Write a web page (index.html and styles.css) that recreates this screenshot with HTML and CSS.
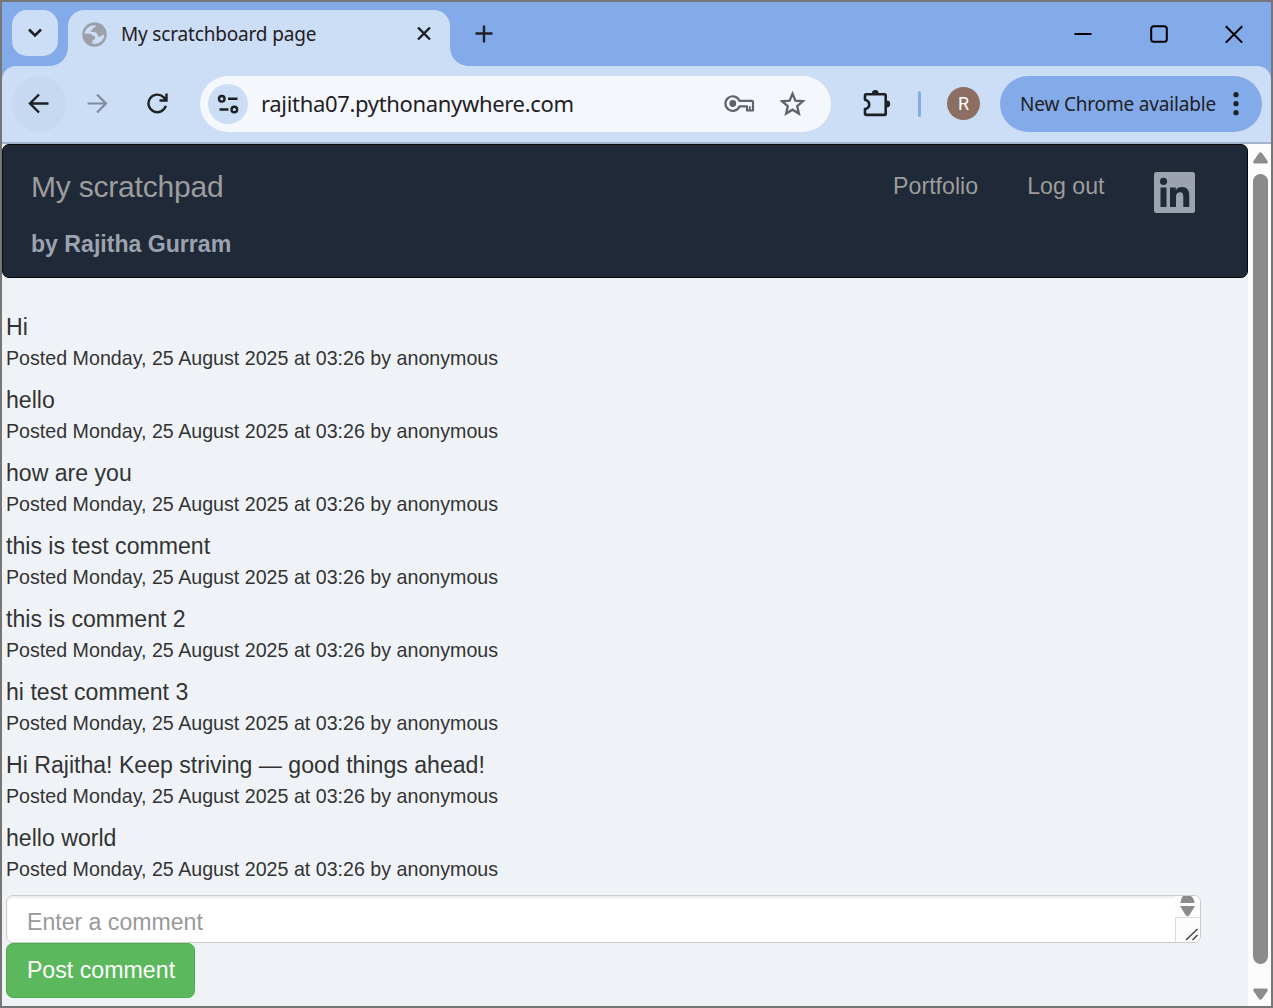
FILE: index.html
```html
<!DOCTYPE html>
<html lang="en">
<head>
<meta charset="utf-8">
<title>My scratchboard page</title>
<link rel="stylesheet" href="styles.css">
</head>
<body>
<div class="window">
  <header class="tabstrip">
    <button class="tab-search" aria-label="Search tabs">
      <svg width="14" height="10" viewBox="0 0 14 10"><path d="M1 1.500l6 6 6-6" fill="none" stroke="#1f2023" stroke-width="2.6"/></svg>
    </button>
    <div class="tab">
      <svg class="globe" width="25" height="25" viewBox="0 0 25 25"><circle cx="12.500" cy="12.500" r="12.200" fill="#9ca1a8"/><g fill="#ccddf6"><path d="M2.600 11.800C3.200 6.500 7.500 2.700 13.500 3.200c.5 1.300-.5 2.300-2.300 2.600-.3 1.800-.7 2.600-2.600 2.700.2 1.300.8 1.700 2.500 1.600 2.500-.2 4 .8 4.500 2.900.5 1.800 2 2 3.500 1.200.7-1 2-1.300 3.200-1.400-.2 5-4.300 9-9.800 9.300-1-.1-2-.3-2.200-.5v-3.200c1.300 0 2.700-.7 2.800-2.200.2-2-.9-2.600-2.800-2.600-.8-1.300-1.500-1.900-3.300-1.800z"/></g></svg>
      <span class="tab-title">My scratchboard page</span>
      <svg class="tab-close" width="14" height="14" viewBox="0 0 14 14"><path d="M1 .5l12 12M13 .5L1 12.500" stroke="#1f2023" stroke-width="2.4"/></svg>
    </div>
    <svg class="new-tab" width="18" height="18" viewBox="0 0 18 18"><path d="M9 .5v17M.5 8.500h17" stroke="#1f2023" stroke-width="2.4"/></svg>
    <div class="controls">
      <svg width="18" height="18" viewBox="0 0 18 18"><path d="M.5 9h17" stroke="#000" stroke-width="2"/></svg>
      <svg width="18" height="18" viewBox="0 0 18 18"><rect x="1.200" y="1.200" width="15.600" height="15.600" rx="2.500" fill="none" stroke="#000" stroke-width="2"/></svg>
      <svg width="18" height="18" viewBox="0 0 18 18"><path d="M.8 1.200l16.400 16.400M17.200 1.200L.8 17.600" stroke="#000" stroke-width="2"/></svg>
    </div>
  </header>

  <div class="toolbar">
    <button class="nav-btn back" aria-label="Back"><svg width="22" height="22" viewBox="0 0 22 22"><path d="M20.500 10.500H2.500M11 1.500l-9 9 9 9" fill="none" stroke="#1f2023" stroke-width="2.400"/></svg></button>
    <svg class="forward" width="22" height="22" viewBox="0 0 22 22"><path d="M.5 10.500h18M10 1.500l9 9-9 9" fill="none" stroke="#808b9e" stroke-width="2.200"/></svg>
    <svg class="reload" width="22" height="22" viewBox="0 0 22 22"><path d="M18.800 12.700a8.800 8.800 0 1 1-2.300-8.500l2.500 2.700M19.500.5v7h-7" fill="none" stroke="#1f2023" stroke-width="2.400"/></svg>
    <div class="omnibox">
      <span class="site-info"><svg width="22" height="20" viewBox="0 0 22 20"><g fill="none" stroke="#1f2023" stroke-width="2.400"><circle cx="4.800" cy="4.800" r="2.800"/><path d="M11 4.800h9.500M2.500 15.500h9"/><circle cx="17.300" cy="15.500" r="2.800"/></g></svg></span>
      <span class="url">rajitha07.pythonanywhere.com</span>
      <svg class="key" width="32" height="20" viewBox="0 0 32 20"><path d="M15.500 6.900a7.300 7.300 0 1 0 0 5.400h7.500v4.200h6V8.200q0-1.300-1.300-1.300z" fill="none" stroke="#5f6368" stroke-width="2.200" stroke-linejoin="round"/><circle cx="8.800" cy="9.500" r="3.400" fill="#5f6368"/><path d="M25.800 16.500v-4.300" stroke="#5f6368" stroke-width="1.800"/></svg>
      <svg class="star" width="26" height="26" viewBox="0 0 26 26"><path d="M12.500 2.800l2.900 6.900 7.500.6-5.700 4.900 1.700 7.400-6.400-3.900-6.400 3.900 1.700-7.400-5.700-4.900 7.500-.6z" fill="none" stroke="#5f6368" stroke-width="2.300"/></svg>
    </div>
    <svg class="puzzle" width="30" height="28" viewBox="0 0 30 28"><path d="M4.200 4.300h18.300q1.200 0 1.200 1.200v18.200q0 1.200-1.200 1.200H4.200q-1.200 0-1.200-1.200v-4.600c5.600-1.500 5.600-7.900 0-9.400V5.500q0-1.200 1.200-1.200z" fill="none" stroke="#1f2023" stroke-width="2.600" stroke-linejoin="round"/><path d="M10 4V3.300a3.300 3.300 0 0 1 6.600 0V4zM24 10.600h.8a3.300 3.300 0 0 1 0 6.800H24z" fill="#1f2023"/></svg>
    <span class="divider"></span>
    <span class="avatar">R</span>
    <div class="update">
      <span>New Chrome available</span>
      <svg width="6" height="24" viewBox="0 0 6 24"><g fill="#1f2023"><circle cx="3" cy="2.700" r="2.600"/><circle cx="3" cy="11.700" r="2.600"/><circle cx="3" cy="20.700" r="2.600"/></g></svg>
    </div>
  </div>

  <div class="viewport">
    <main class="page">
      <nav class="navbar">
        <div class="brand">
          <div class="brand-title">My scratchpad</div>
          <div class="author">by Rajitha Gurram</div>
        </div>
        <div class="links">
          <a class="link">Portfolio</a>
          <a class="link">Log out</a>
          <svg class="linkedin" width="41" height="41" viewBox="0 0 41 41"><rect width="41" height="41" rx="2.500" fill="#9ca3af"/><g fill="#1f2937"><circle cx="9.500" cy="9.300" r="3.600"/><path d="M6.500 15.600h6V35h-6zM16 15.600h5.800v2.700c1.300-2 3.300-3.200 6-3.200 5.300 0 7.500 3.100 7.500 8.700V35h-6V25c0-3-.8-4.800-3.300-4.800-2.800 0-4 1.900-4 4.900V35h-6z"/></g></svg>
        </div>
      </nav>

      <section class="comments">
        <article class="comment"><div class="text">Hi</div><div class="meta">Posted Monday, 25 August 2025 at 03:26 by anonymous</div></article>
        <article class="comment"><div class="text">hello</div><div class="meta">Posted Monday, 25 August 2025 at 03:26 by anonymous</div></article>
        <article class="comment"><div class="text">how are you</div><div class="meta">Posted Monday, 25 August 2025 at 03:26 by anonymous</div></article>
        <article class="comment"><div class="text">this is test comment</div><div class="meta">Posted Monday, 25 August 2025 at 03:26 by anonymous</div></article>
        <article class="comment"><div class="text">this is comment 2</div><div class="meta">Posted Monday, 25 August 2025 at 03:26 by anonymous</div></article>
        <article class="comment"><div class="text">hi test comment 3</div><div class="meta">Posted Monday, 25 August 2025 at 03:26 by anonymous</div></article>
        <article class="comment"><div class="text">Hi Rajitha! Keep striving — good things ahead!</div><div class="meta">Posted Monday, 25 August 2025 at 03:26 by anonymous</div></article>
        <article class="comment"><div class="text">hello world</div><div class="meta">Posted Monday, 25 August 2025 at 03:26 by anonymous</div></article>
      </section>

      <form class="form">
        <div class="field">
          <span class="placeholder">Enter a comment</span>
          <span class="field-side">
            <svg width="25" height="46" viewBox="0 0 25 46"><path d="M0 0h25v46H0z" fill="#fcfcfc"/><path d="M8 0h8q3.500 3 3.500 7H5.500q0-4 2.500-7zM5 10h15l-5.500 9q-2 2.500-4 0z" fill="#8b8b8b"/><path d="M0 21.500h25M.5 21.500V46" stroke="#dadada" fill="none"/><path d="M11 44l11.500-11M17.500 44l5-5" stroke="#444" stroke-width="1.500"/></svg>
          </span>
        </div>
        <button class="post" type="button">Post comment</button>
      </form>
    </main>
    <aside class="scrollbar">
      <svg width="15" height="12" viewBox="0 0 15 12"><path d="M6 1q1.500-1.600 3 0l5.500 8q1 2.500-1.500 2.500H2Q-.5 11.500.5 9z" fill="#8b8b8b"/></svg>
      <span class="thumb"></span>
      <svg width="15" height="12" viewBox="0 0 15 12"><path d="M6 11q1.500 1.600 3 0l5.500-8q1-2.500-1.500-2.500H2Q-.5.500.5 3z" fill="#8b8b8b"/></svg>
    </aside>
  </div>
</div>
</body>
</html>
```
FILE: styles.css
```css
* { box-sizing: border-box; }
body { margin: 0; }
svg { display: block; flex: none; }
button { border: 0; padding: 0; font: inherit; }

.window {
  width: 1273px;
  height: 1008px;
  border: 2px solid #767676;
  background: #84abe9;
  display: flex;
  flex-direction: column;
  overflow: hidden;
  font-family: "Noto Sans", "Open Sans", sans-serif;
  color: #1f2023;
  white-space: nowrap;
}

.tabstrip {
  height: 64px;
  display: flex;
  padding: 8px 28px 0 10px;
}
.tab-search {
  width: 46px;
  height: 46px;
  border-radius: 15px;
  background: #ccddf6;
  display: flex;
  align-items: center;
  justify-content: center;
}
.tab {
  position: relative;
  width: 382px;
  height: 56px;
  margin-left: 10px;
  padding: 0 19px 8px 14px;
  border-radius: 16px 16px 0 0;
  background: #ccddf6;
  display: flex;
  align-items: center;
}
.tab::before,
.tab::after {
  content: "";
  position: absolute;
  bottom: 0;
  width: 18px;
  height: 18px;
}
.tab::before { right: 100%; background: radial-gradient(circle at 0 0, transparent 17.5px, #ccddf6 18px); }
.tab::after { left: 100%; background: radial-gradient(circle at 100% 0, transparent 17.5px, #ccddf6 18px); }
.tab-title { margin-left: 14px; font-size: 19px; letter-spacing: -0.17px; }
.tab-close { margin-left: auto; }
.new-tab { margin: 15px 0 0 25px; }
.controls { margin: 15px 0 0 auto; display: flex; gap: 57.500px; }

.toolbar {
  height: 78px;
  padding: 0 9px 0 10px;
  border-bottom: 2px solid #a5b4cc;
  border-radius: 14px 14px 0 0;
  background: #ccddf6;
  display: flex;
  align-items: center;
}
.nav-btn {
  width: 54px;
  height: 56px;
  border-radius: 28px;
  background: #c7d8f1;
  display: flex;
  align-items: center;
  justify-content: center;
}
.forward { margin-left: 21px; }
.reload { margin-left: 38px; }
.omnibox {
  width: 631px;
  height: 56px;
  margin-left: 31px;
  padding: 0 25px 0 8px;
  border-radius: 28px;
  background: #f4f8fd;
  display: flex;
  align-items: center;
}
.site-info {
  width: 40px;
  height: 40px;
  border-radius: 50%;
  background: #ccddf6;
  display: flex;
  align-items: center;
  justify-content: center;
}
.url { margin: -2px 0 0 13px; font-size: 22px; letter-spacing: -0.33px; }
.key { margin-left: auto; }
.star { margin-left: 24px; }
.puzzle { margin-left: 31px; }
.divider { width: 3px; height: 26px; margin-left: 26px; border-radius: 2px; background: #84abe9; }
.avatar {
  width: 33px;
  height: 33px;
  margin: -1px 0 0 26px;
  border-radius: 50%;
  background: #8d6e63;
  color: #fff;
  font: 18px/33px Roboto, sans-serif;
  text-align: center;
}
.update {
  width: 262px;
  height: 56px;
  margin-left: auto;
  padding: 0 23px 0 20px;
  border-radius: 28px;
  background: #84abe9;
  display: flex;
  align-items: center;
  justify-content: space-between;
  font-size: 19px;
  letter-spacing: -0.18px;
}

.viewport {
  flex: 1;
  min-height: 0;
  display: flex;
  background: #fcfcfc;
  font: 23px/32px "Liberation Sans", Arial, sans-serif;
}
.page { width: 1246px; background: #eff3f8; color: #333; }
.navbar {
  height: 134px;
  padding: 0 52.500px 0 28px;
  border: 1px solid #080808;
  border-radius: 7px;
  background: #1f2937;
  display: flex;
  justify-content: space-between;
}
.brand-title { margin-top: 26px; font-size: 30px; letter-spacing: -0.2px; color: #9d9d9d; }
.author { margin-top: 25px; font-size: 23.100px; font-weight: bold; color: #9ca3af; }
.links { display: flex; align-items: flex-start; gap: 49px; padding-top: 25px; }
.link { font-size: 23.200px; color: #9d9d9d; }
.linkedin { margin-top: 2px; }

.comments { padding: 33px 4px 0; }
.comment { height: 73px; font-size: 23.100px; }
.meta { font-size: 19.650px; line-height: 30px; }

.form { padding-left: 4px; }
.field {
  width: 1195px;
  height: 48px;
  border: 1px solid #ccc;
  border-radius: 7px;
  background: #fff;
  box-shadow: inset 0 2px 2px rgba(0, 0, 0, 0.075);
  display: flex;
  justify-content: space-between;
  overflow: hidden;
}
.placeholder { padding: 10px 0 0 20px; font-size: 23.100px; color: #999; }
.post {
  width: 189px;
  height: 55px;
  padding: 0 0 2px 1px;
  border: 1px solid #4cae4c;
  border-radius: 7px;
  background: #5cb85c;
  color: #fff;
  font-size: 23.200px;
  display: block;
}

.scrollbar {
  width: 23px;
  padding: 8px 2px 6px 3px;
  display: flex;
  flex-direction: column;
  align-items: center;
}
.thumb { width: 15px; height: 790px; margin: 10px 0 auto; border-radius: 8px; background: #8b8b8b; }
```
